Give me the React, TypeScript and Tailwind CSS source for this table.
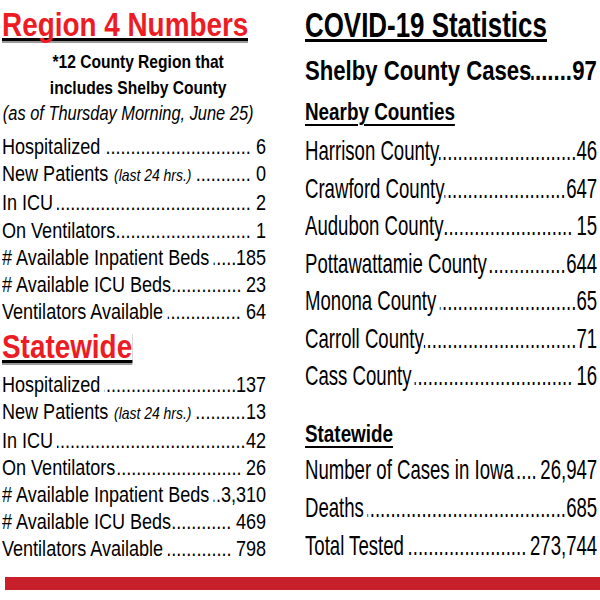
import type { ReactNode } from "react";

type Stat = { label: string; note?: string; value: string; gap?: boolean; pad?: boolean };

const regionRows: Stat[] = [
  { label: "Hospitalized", value: "6", gap: true, pad: true },
  { label: "New Patients", note: "(last 24 hrs.)", value: "0", gap: true, pad: true },
  { label: "In ICU", value: "2", gap: true, pad: true },
  { label: "On Ventilators", value: "1", pad: true },
  { label: "# Available Inpatient Beds", value: "185", gap: true },
  { label: "# Available ICU Beds", value: "23", pad: true },
  { label: "Ventilators Available", value: "64", gap: true, pad: true },
];

const stateRows: Stat[] = [
  { label: "Hospitalized", value: "137", gap: true },
  { label: "New Patients", note: "(last 24 hrs.)", value: "13", gap: true },
  { label: "In ICU", value: "42", gap: true },
  { label: "On Ventilators", value: "26", pad: true },
  { label: "# Available Inpatient Beds", value: "3,310", gap: true },
  { label: "# Available ICU Beds", value: "469", pad: true },
  { label: "Ventilators Available", value: "798", gap: true, pad: true },
];

const countyRows: Stat[] = [
  { label: "Harrison County", value: "46" },
  { label: "Crawford County", value: "647" },
  { label: "Audubon County", value: "15", pad: true },
  { label: "Pottawattamie County", value: "644" },
  { label: "Monona County", value: "65", gap: true },
  { label: "Carroll County", value: "71" },
  { label: "Cass County", value: "16", gap: true, pad: true },
];

const iowaRows: Stat[] = [
  { label: "Number of Cases in Iowa", value: "26,947", gap: true, pad: true },
  { label: "Deaths", value: "685", gap: true },
  { label: "Total Tested", value: "273,744", gap: true, pad: true },
];

const DOTS = ".".repeat(120);

// dotted leader row: label ..... value
function Leader({ row }: { row: Stat }) {
  return (
    <div className="flex items-baseline whitespace-nowrap">
      <span className={row.gap ? "pr-[5px]" : ""}>
        {row.label}
        {row.note && <i className="pl-[7px] text-[17px]">{row.note}</i>}
      </span>
      <span dir="rtl" className="min-w-0 flex-1 overflow-hidden">
        {DOTS}
      </span>
      <span className={row.pad ? "pl-[6px]" : ""}>{row.value}</span>
    </div>
  );
}

function RedTitle({ children }: { children: ReactNode }) {
  return (
    <div className="inline-block border-b-[3px] border-black text-[34px] font-bold leading-[28px] text-[#ed1c24] shadow-[0_2px_0_#9a9a9a]">
      {children}
    </div>
  );
}

export default function App() {
  return (
    <div className="relative h-[600px] w-[600px] overflow-hidden bg-white font-['Liberation_Sans','Arial',sans-serif] text-black">
      <div className="flex">
        {/* Region 4 column, squeezed to an Arial Narrow width */}
        <div className="w-[268px] shrink-0 pl-[2px]">
          <div className="w-[322px] origin-left scale-x-[0.82]">
            <div className="mt-[10px]">
              <RedTitle>Region 4 Numbers</RedTitle>
            </div>
            <div className="mt-[6px] pl-[10px] text-center text-[19px] font-bold leading-[26px]">
              <div>*12 County Region that</div>
              <div>includes Shelby County</div>
            </div>
            <div className="pl-[1px] text-[20px] italic leading-[24px]">(as of Thursday Morning, June 25)</div>
            <div className="mt-[8px] text-[22px] leading-[27.2px]">
              {regionRows.map((r) => (
                <Leader key={r.label} row={r} />
              ))}
            </div>
            <div className="mt-[7px]">
              <RedTitle>Statewide</RedTitle>
            </div>
            <div className="mt-[6px] text-[22px] leading-[27px]">
              {stateRows.map((r) => (
                <Leader key={r.label} row={r} />
              ))}
            </div>
          </div>
        </div>

        {/* COVID-19 column */}
        <div className="ml-[37px] w-[292px] shrink-0 overflow-hidden">
          <div className="mt-[10px] w-[395px] origin-left scale-x-[0.74]">
            <div className="inline-block border-b-[3px] border-black text-[35px] font-bold leading-[29px]">
              COVID-19 Statistics
            </div>
          </div>
          <div className="mt-[11px] w-[356px] origin-left scale-x-[0.82] text-[27px] font-bold leading-[32px]">
            <Leader row={{ label: "Shelby County Cases", value: "97" }} />
          </div>
          <div className="mt-[11px] w-[356px] origin-left scale-x-[0.82] text-[23px] font-bold leading-[28px] underline decoration-2 underline-offset-[4px]">
            Nearby Counties
          </div>
          <div className="mt-[6px] w-[440px] origin-left scale-x-[0.664] text-[28px] leading-[37.5px]">
            {countyRows.map((r) => (
              <Leader key={r.label} row={r} />
            ))}
          </div>
          <div className="mt-[25px] w-[356px] origin-left scale-x-[0.82] text-[23px] font-bold leading-[28px] underline decoration-2 underline-offset-[4px]">
            Statewide
          </div>
          <div className="mt-[3px] w-[440px] origin-left scale-x-[0.664] text-[28px] leading-[38px]">
            {iowaRows.map((r) => (
              <Leader key={r.label} row={r} />
            ))}
          </div>
        </div>
      </div>
      <div className="mt-[12px] ml-[5px] h-[13px] bg-[#c8202b]" />
    </div>
  );
}
